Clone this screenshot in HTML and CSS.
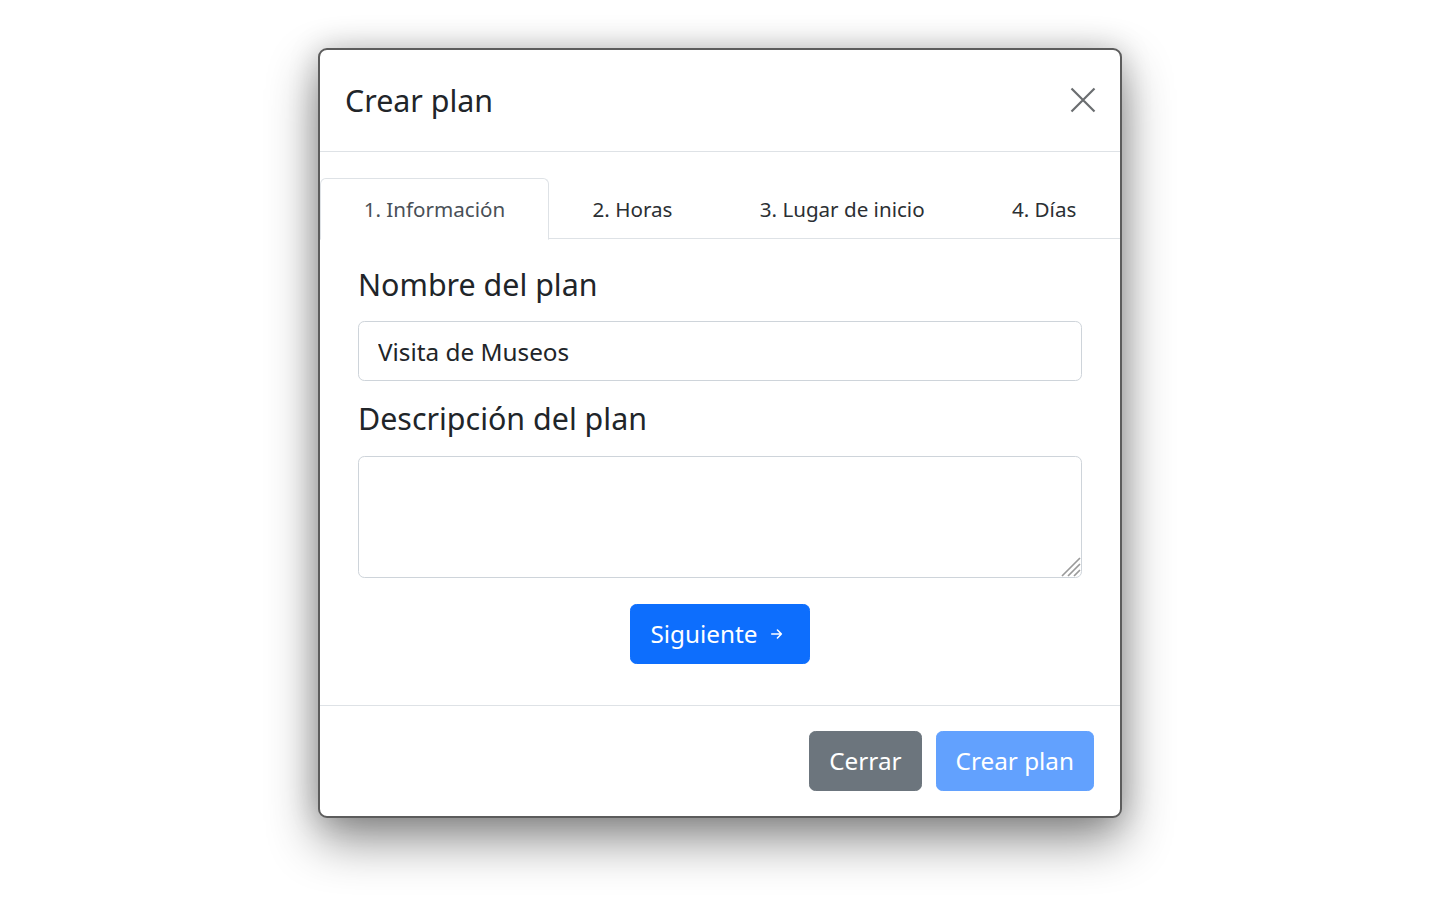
FILE: index.html
```html
<!DOCTYPE html>
<html lang="es">
<head>
<meta charset="utf-8">
<title>Crear plan</title>
<link rel="stylesheet" href="styles.css">
</head>
<body>
<div class="backdrop">
  <div class="modal">
    <div class="modal-header">
      <h5 class="modal-title">Crear plan</h5>
      <button class="btn-close" aria-label="Cerrar">
        <svg width="26" height="26" viewBox="0 0 26 26"><path d="M1.5 1.5 L24.5 24.5 M24.5 1.5 L1.5 24.5" stroke="#6a6d70" stroke-width="2.2" fill="none"/></svg>
      </button>
    </div>
    <div class="modal-body">
      <ul class="nav-tabs">
        <li class="nav-item"><span class="nav-link active">1. Información</span></li>
        <li class="nav-item"><span class="nav-link">2. Horas</span></li>
        <li class="nav-item"><span class="nav-link">3. Lugar de inicio</span></li>
        <li class="nav-item"><span class="nav-link">4. Días</span></li>
      </ul>
      <div class="tab-content">
        <label class="form-label label-first">Nombre del plan</label>
        <input class="form-control" type="text" value="Visita de Museos">
        <label class="form-label">Descripción del plan</label>
        <div class="textarea-wrap">
          <textarea class="form-control textarea"></textarea>
          <svg class="grip" width="26" height="26" viewBox="0 0 26 26"><path d="M25 7 L7 25 M25 13 L13 25 M25 19 L19 25" stroke="#9a9a9a" stroke-width="1.7" fill="none"/></svg>
        </div>
        <div class="center">
          <button class="btn btn-primary">Siguiente
            <svg class="arrow" width="14" height="14" viewBox="0 0 16 16"><path d="M2 8 H13 M8.5 3.5 L13 8 L8.5 12.5" stroke="#fff" stroke-width="1.8" fill="none" stroke-linecap="round" stroke-linejoin="round"/></svg>
          </button>
        </div>
      </div>
    </div>
    <div class="modal-footer">
      <button class="btn btn-secondary">Cerrar</button>
      <button class="btn btn-primary disabled">Crear plan</button>
    </div>
  </div>
</div>
</body>
</html>
```
FILE: styles.css
```css
* { box-sizing: border-box; }
html, body {
  margin: 0;
  padding: 0;
  background: #ffffff;
  font-family: "Noto Sans", "Open Sans", sans-serif;
  color: #212529;
}
.backdrop {
  display: flex;
  justify-content: center;
  padding-top: 48px;
  height: 900px;
}
.modal {
  width: 804px;
  height: 770px;
  background: #fff;
  border: 2px solid #5c5c5c;
  border-radius: 9px;
  box-shadow: 0 22px 50px rgba(0,0,0,0.45), 0 0 30px rgba(0,0,0,0.18);
  display: flex;
  flex-direction: column;
}
.modal-header {
  display: flex;
  align-items: center;
  justify-content: space-between;
  padding: 25px 24px 25px 25px;
  border-bottom: 1.6px solid #dee2e6;
  height: 102px;
}
.modal-title {
  margin: 0;
  font-size: 30.4px;
  font-weight: 400;
  line-height: 48px;
  color: #212529;
}
.btn-close {
  background: none;
  border: none;
  padding: 0;
  width: 26px;
  height: 26px;
  margin-top: -2px;
  display: flex;
}
.modal-body {
  padding-top: 26px;
  padding-bottom: 40px;
}
.nav-tabs {
  list-style: none;
  margin: 0;
  padding: 0;
  display: flex;
  border-bottom: 1.6px solid #dee2e6;
}
.nav-item {
  flex: 1 1 auto;
  text-align: center;
}
.nav-link {
  display: block;
  padding: 12px 25px;
  height: 62px;
  font-size: 20.6px;
  line-height: 36px;
  color: #2b2f33;
  border: 1.6px solid transparent;
  border-top-left-radius: 6px;
  border-top-right-radius: 6px;
  margin-bottom: -1.6px;
}
.nav-link.active {
  color: #495057;
  background: #fff;
  border-color: #dee2e6 #dee2e6 #fff;
}
.tab-content {
  padding: 0 38px;
  display: flex;
  flex-direction: column;
}
.form-label {
  display: block;
  font-size: 30.4px;
  line-height: 45px;
  margin-top: 15px;
  margin-bottom: 15px;
  color: #212529;
}
.form-label.label-first {
  margin-top: 23px;
  margin-bottom: 14px;
}
.form-control {
  display: block;
  width: 100%;
  height: 60px;
  padding: 9px 19px;
  font-family: inherit;
  font-size: 24.3px;
  line-height: 38px;
  color: #212529;
  border: 1.6px solid #ced4da;
  border-radius: 6.4px;
  background: #fff;
  outline: none;
}
.textarea-wrap {
  position: relative;
}
.textarea {
  height: 122px;
  resize: none;
}
.grip {
  position: absolute;
  right: 1px;
  bottom: 1px;
}
.center {
  display: flex;
  justify-content: center;
  margin-top: 26px;
}
.btn {
  font-family: inherit;
  font-size: 24.3px;
  line-height: 38px;
  height: 60px;
  padding: 9px 19px;
  border: 1.6px solid transparent;
  border-radius: 6.4px;
  color: #fff;
  display: inline-flex;
  align-items: center;
}
.btn-primary {
  background: #0d6efd;
  border-color: #0d6efd;
}
.btn-primary .arrow {
  margin-left: 12px;
  margin-right: 6px;
}
.btn-primary.disabled {
  background: #62a1fe;
  border-color: #62a1fe;
}
.btn-secondary {
  background: #6c757d;
  border-color: #6c757d;
}
.modal-footer {
  margin-top: auto;
  border-top: 1.6px solid #dee2e6;
  display: flex;
  justify-content: flex-end;
  gap: 14px;
  padding: 25px 26px 25px 0;
}
```
